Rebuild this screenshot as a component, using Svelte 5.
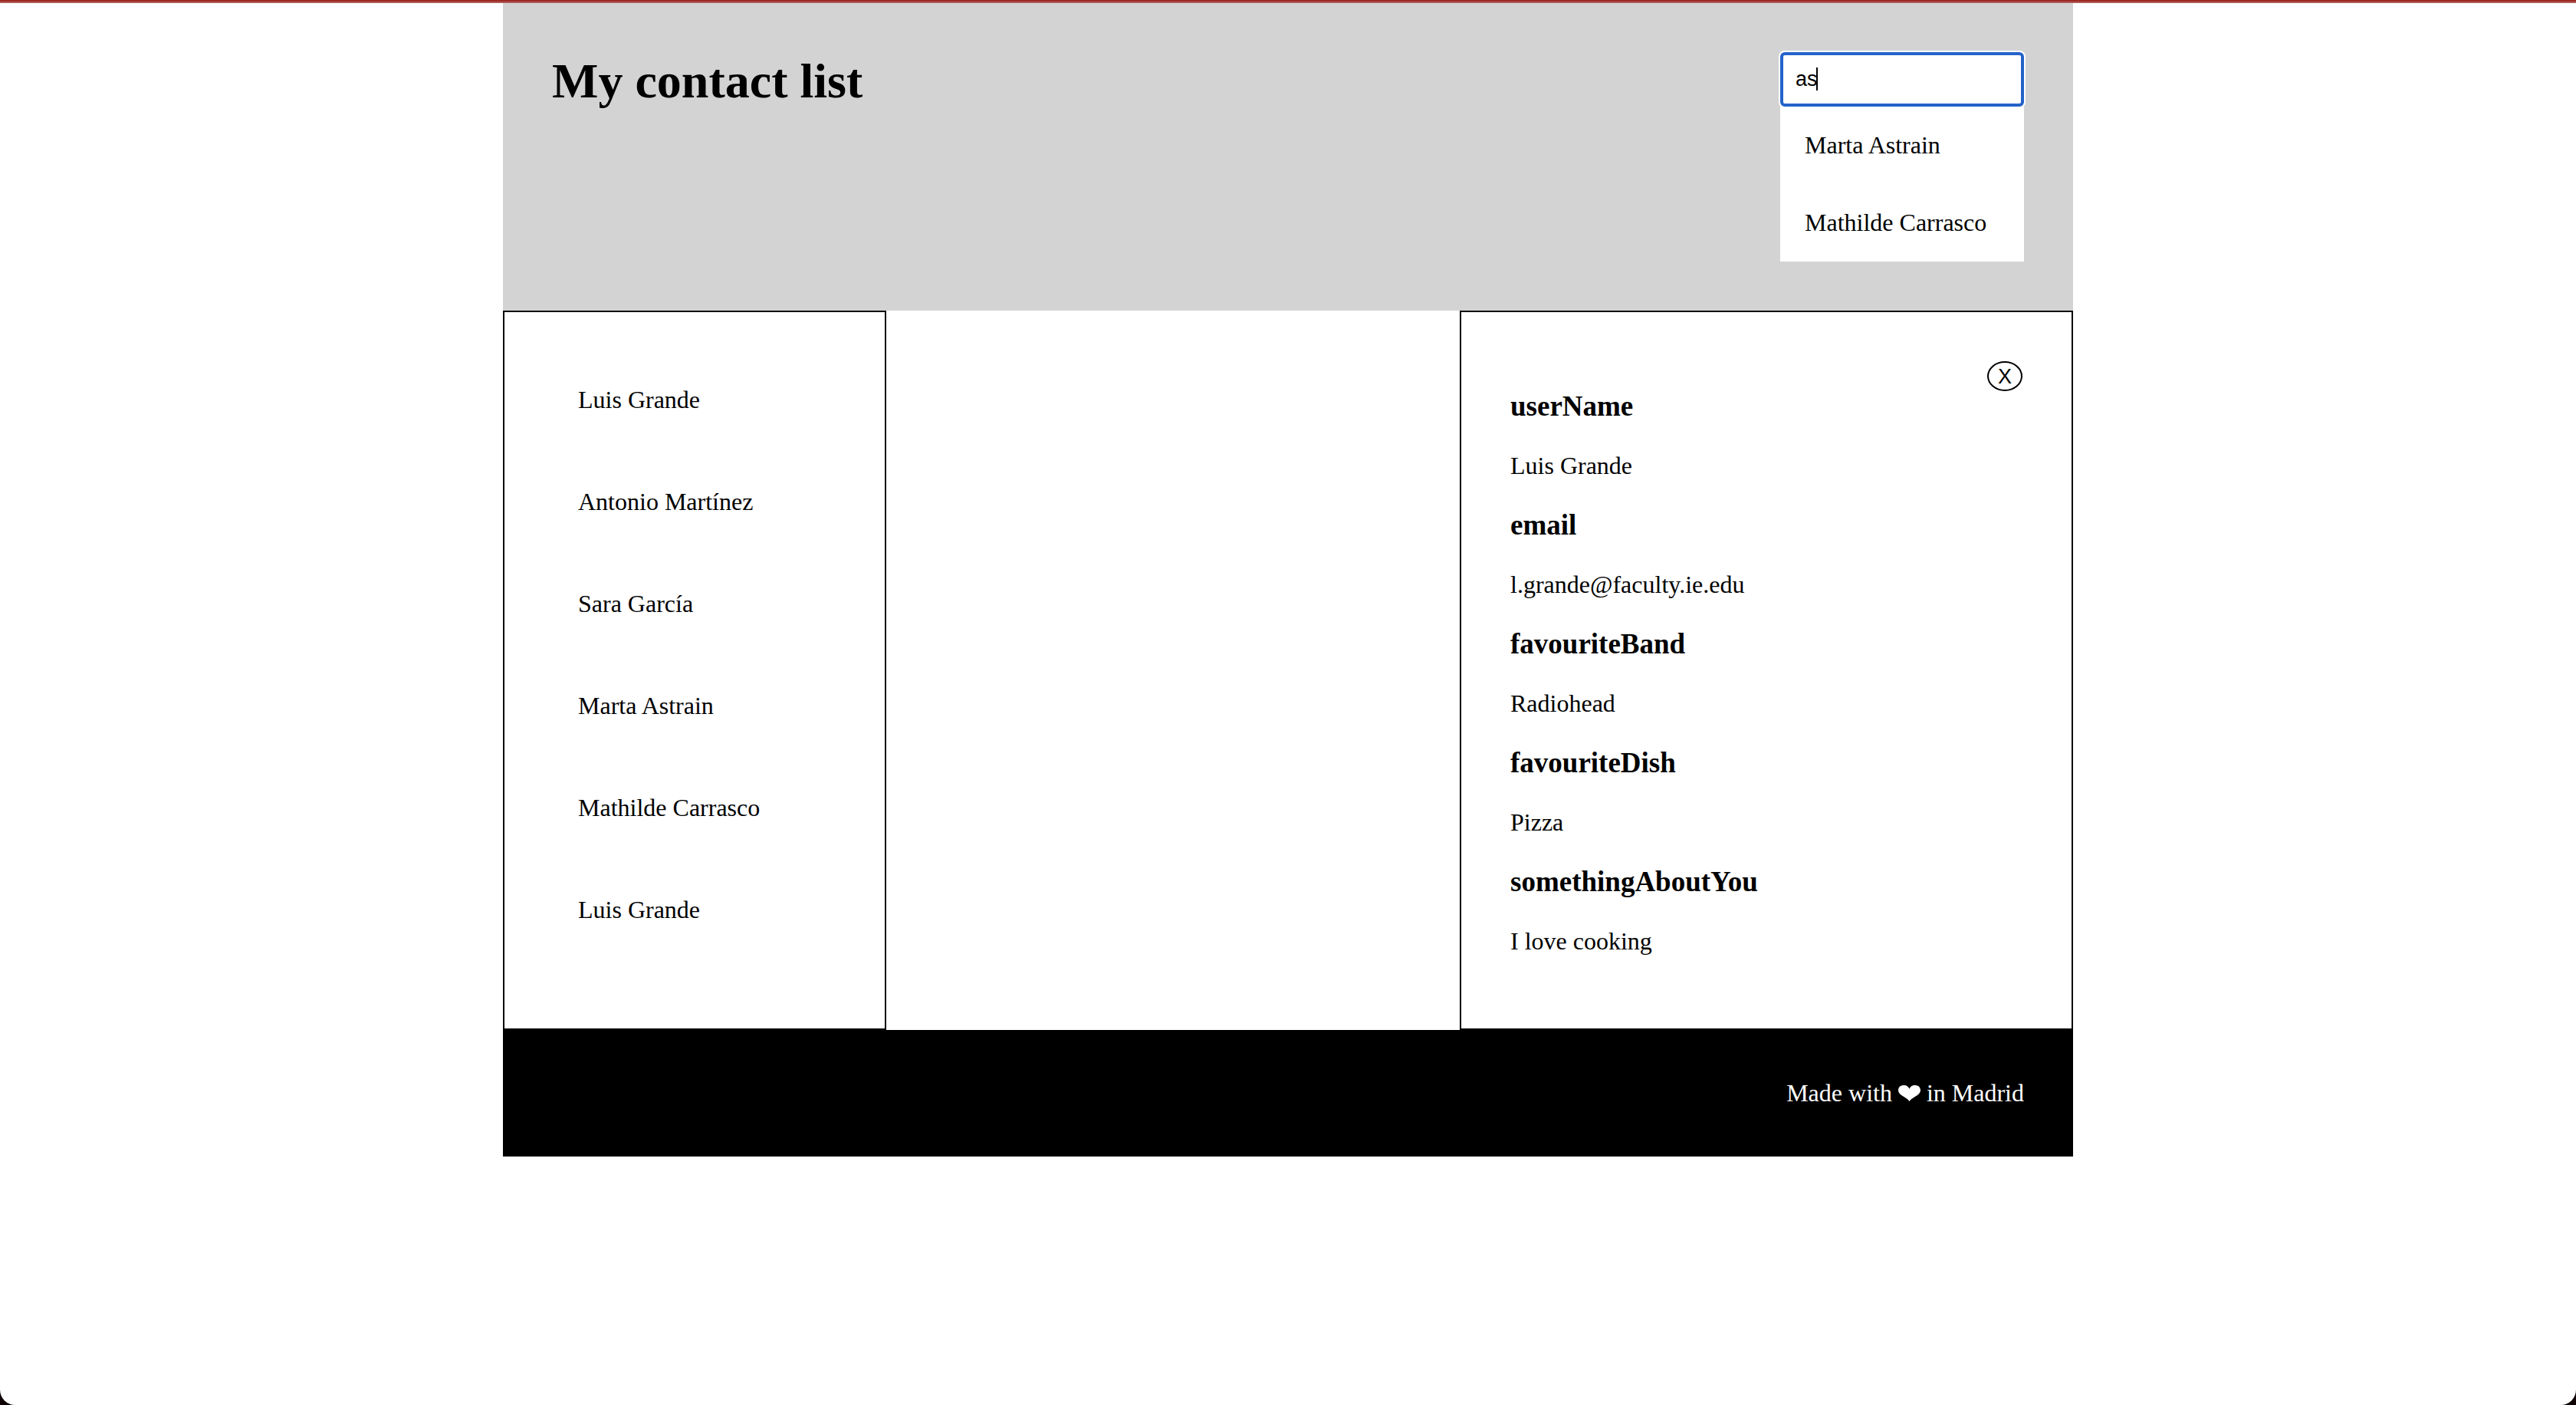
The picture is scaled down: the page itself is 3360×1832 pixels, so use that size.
<script>
  const contacts = [
    { userName: 'Luis Grande', email: 'l.grande@faculty.ie.edu', favouriteBand: 'Radiohead', favouriteDish: 'Pizza', somethingAboutYou: 'I love cooking' },
    { userName: 'Antonio Martínez' },
    { userName: 'Sara García' },
    { userName: 'Marta Astrain' },
    { userName: 'Mathilde Carrasco' },
    { userName: 'Luis Grande' }
  ];

  let query = $state('as');
  let selected = $state(contacts[0]);

  const matches = $derived(
    query ? contacts.filter((c) => c.userName.toLowerCase().includes(query.toLowerCase())) : []
  );
</script>

<div class="page">
  <div class="container">
    <header>
      <h1>My contact list</h1>
      <div class="search">
        <div class="field">
          <input type="text" aria-label="Search contacts" autocomplete="off" bind:value={query} />
          {#if query === 'as'}<span class="caret"></span>{/if}
        </div>
        <ul class="results">
          {#each matches as contact}
            <li><button class="plain" onclick={() => (selected = contact)}>{contact.userName}</button></li>
          {/each}
        </ul>
      </div>
    </header>

    <main>
      <ul class="contacts">
        {#each contacts as contact}
          <li><button class="plain" onclick={() => (selected = contact)}>{contact.userName}</button></li>
        {/each}
      </ul>
      {#if selected}
        <section class="details">
          <button class="close" aria-label="Close" onclick={() => (selected = null)}>X</button>
          <div class="fields">
            {#each Object.entries(selected) as [name, value]}
              <h3>{name}</h3>
              <p>{value}</p>
            {/each}
          </div>
        </section>
      {/if}
    </main>

    <footer>
      <p>Made with <svg class="heart" viewBox="0 0 29 21" role="img" aria-label="love"><path d="M14.5 21C12.5 17.6 8.500 15.800 4.800 13.400C1.800 11.500 0 9.500 0 6.500C0 2.800 2.900 0 7.300 0C10.700 0 13.300 1.700 14.500 4.800C15.700 1.700 18.300 0 21.700 0C26.100 0 29 2.800 29 6.500C29 9.500 27.200 11.500 24.200 13.400C20.500 15.800 16.500 17.600 14.500 21Z" /></svg> in Madrid</p>
    </footer>
  </div>
</div>

<style>
  :global(body) {
    margin: 0;
    background: #0e0203;
  }

  .page {
    box-sizing: border-box;
    min-height: 100vh;
    background: #fff;
    border-radius: 0 0 20px 20px;
    color: #000;
    font: 32px/37px "Liberation Serif", "Times New Roman", serif;
  }

  .page::before {
    content: "";
    display: block;
    height: 2px;
    background: #9b2a24;
    border-bottom: 2px solid #ad5a55;
  }

  .container {
    max-width: 2048px;
    margin: 0 auto;
  }

  h1, h3, p, ul {
    margin: 0;
    padding: 0;
  }

  ul {
    list-style: none;
  }

  button {
    margin: 0;
    color: inherit;
    background: none;
    cursor: pointer;
  }

  .plain {
    display: block;
    width: 100%;
    padding: 32px;
    border: 0;
    font: inherit;
    text-align: left;
    white-space: nowrap;
  }

  header {
    display: flex;
    justify-content: space-between;
    align-items: flex-start;
    padding: 64px;
    background: #d3d3d3;
  }

  h1 {
    font-size: 64px;
    line-height: 75px;
  }

  .search {
    width: 318px;
    background: #fff;
  }

  .field {
    position: relative;
  }

  input {
    display: block;
    box-sizing: border-box;
    width: 100%;
    height: 71px;
    padding: 0 16px;
    border: 4px solid #2463c9;
    border-radius: 6px;
    outline: 0;
    box-shadow: 0 0 0 2px #fff;
    background: #fff;
    color: #000;
    font: 27px/30px "Liberation Sans", Arial, sans-serif;
  }

  .caret {
    position: absolute;
    top: 20px;
    left: 47px;
    width: 2px;
    height: 30px;
    background: #000;
  }

  main {
    display: flex;
    justify-content: space-between;
  }

  .contacts,
  .details {
    box-sizing: border-box;
    padding: 64px;
    border: 2px solid #000;
  }

  .contacts {
    width: 500px;
  }

  .contacts li {
    margin-bottom: 32px;
  }

  .details {
    width: 800px;
  }

  .close {
    float: right;
    box-sizing: border-box;
    width: 46px;
    height: 39px;
    padding: 0;
    border: 2px solid #000;
    border-radius: 50%;
    font: 27px/30px "Liberation Sans", Arial, sans-serif;
  }

  .fields {
    display: flex;
    flex-direction: column;
    gap: 37px;
    padding: 37px 0 31px;
  }

  h3 {
    font-size: 37px;
    line-height: 44px;
  }

  footer {
    padding: 64px;
    background: #000;
    color: #fff;
    text-align: right;
  }

  .heart {
    width: 29px;
    height: 21px;
    fill: currentColor;
  }
</style>
